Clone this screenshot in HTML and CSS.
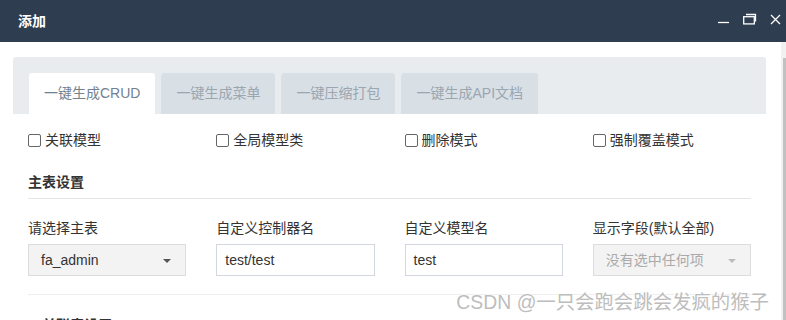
FILE: index.html
```html
<!DOCTYPE html>
<html lang="zh-CN">
<head>
    <meta charset="UTF-8">
    <title>添加</title>
    <link rel="stylesheet" href="styles.css">
</head>
<body>

<div class="layer-title">
    <span>添加</span>
    <div class="layer-controls">
        <svg width="12" height="12" viewBox="0 0 12 12"><path d="M0 9.5h11" stroke="#fff" stroke-width="1.3" fill="none"/></svg>
        <svg width="14" height="12" viewBox="0 0 14 12"><path d="M3 1.5h9.5v7" stroke="#fff" stroke-width="1.3" fill="none"/><rect x="0.7" y="3.7" width="10.6" height="7.2" stroke="#fff" stroke-width="1.3" fill="none"/></svg>
        <svg width="11" height="11" viewBox="0 0 11 11"><path d="M1 1l9 9M10 1l-9 9" stroke="#fff" stroke-width="1.3" fill="none"/></svg>
    </div>
</div>

<div class="layer-body">
    <div class="content">
        <div class="tabs">
            <a class="tab active" href="#">一键生成CRUD</a>
            <a class="tab" href="#">一键生成菜单</a>
            <a class="tab" href="#">一键压缩打包</a>
            <a class="tab" href="#">一键生成API文档</a>
        </div>

        <div class="form">
            <div class="grid checks">
                <label class="check"><span class="box"></span>关联模型</label>
                <label class="check"><span class="box"></span>全局模型类</label>
                <label class="check"><span class="box"></span>删除模式</label>
                <label class="check"><span class="box"></span>强制覆盖模式</label>
            </div>

            <h4 class="legend">主表设置</h4>

            <div class="grid fields">
                <div class="field">
                    <div class="label">请选择主表</div>
                    <div class="select">fa_admin<span class="caret"></span></div>
                </div>
                <div class="field">
                    <div class="label">自定义控制器名</div>
                    <div class="input">test/test</div>
                </div>
                <div class="field">
                    <div class="label">自定义模型名</div>
                    <div class="input">test</div>
                </div>
                <div class="field">
                    <div class="label">显示字段(默认全部)</div>
                    <div class="select disabled">没有选中任何项<span class="caret"></span></div>
                </div>
            </div>

            <h4 class="legend next"><span class="plus">+</span>关联表设置</h4>
        </div>

        <div class="watermark">CSDN @一只会跑会跳会发疯的猴子</div>
    </div>

    <div class="scrollbar"><div class="thumb"></div></div>
</div>

</body>
</html>
```

FILE: styles.css
```css
body {
    margin: 0;
    font-family: "Liberation Sans", "Noto Sans CJK SC", sans-serif;
    font-size: 14px;
    color: #333;
    background: #fff;
    overflow: hidden;
}
.layer-title {
    height: 42px;
    line-height: 42px;
    background: #2e3d4f;
    color: #fff;
    font-weight: bold;
    padding-left: 18px;
    display: flex;
    justify-content: space-between;
}
.layer-controls {
    display: flex;
    align-items: center;
    gap: 13px;
    padding-right: 5px;
    margin-top: -4px;
}
.layer-body {
    display: flex;
    height: 278px;
}
.content {
    flex: 1;
    padding: 15px 15px 0 13px;
    position: relative;
}
.tabs {
    display: flex;
    gap: 6px;
    background: #e8ecef;
    padding: 16px 0 0 16px;
    border-radius: 3px 3px 0 0;
}
.tab {
    height: 41px;
    line-height: 41px;
    padding: 0 15px;
    background: #d8dfe5;
    color: #9aa6b0;
    text-decoration: none;
    border-radius: 3px 3px 0 0;
}
.tab.active {
    background: #fff;
    color: #72818f;
}
.form {
    padding: 0 15px;
}
.grid {
    display: grid;
    grid-template-columns: repeat(4, 1fr);
    column-gap: 30px;
}
.checks {
    margin-top: 16px;
    line-height: 20px;
}
.check {
    display: flex;
    align-items: center;
}
.box {
    width: 11px;
    height: 11px;
    border: 1px solid #666;
    border-radius: 2px;
    margin-right: 4px;
}
.legend {
    margin: 22px 0 0;
    padding-bottom: 6px;
    line-height: 20px;
    font-size: 14px;
    border-bottom: 1px solid #e5e5e5;
}
.fields {
    margin-top: 19px;
    padding-bottom: 18px;
    border-bottom: 1px solid #eee;
}
.label {
    line-height: 20px;
    margin-bottom: 6px;
}
.input, .select {
    height: 30px;
    line-height: 30px;
    border: 1px solid #d2d6de;
    padding: 0 8px;
}
.select {
    position: relative;
    background: #f3f3f3;
    border-color: #ddd;
    padding: 0 12px;
}
.select.disabled {
    color: #aaa;
}
.caret {
    position: absolute;
    right: 14px;
    top: 14px;
    border-top: 4px solid #555;
    border-left: 4px solid transparent;
    border-right: 4px solid transparent;
}
.disabled .caret {
    border-top-color: #bbb;
}
.legend.next {
    margin-top: 20px;
    border-bottom: none;
}
.plus {
    margin-right: 6px;
}
.watermark {
    position: absolute;
    right: 12px;
    top: 244px;
    font-size: 19.4px;
    color: #bdbdbd;
    text-shadow: 0 0 2px #fff, 0 0 2px #fff;
}
.scrollbar {
    width: 5px;
    background: #f1f1f1;
    padding-top: 16px;
    display: flex;
    justify-content: flex-end;
}
.thumb {
    width: 3px;
    height: 100%;
    background: #c1c1c1;
}
```
